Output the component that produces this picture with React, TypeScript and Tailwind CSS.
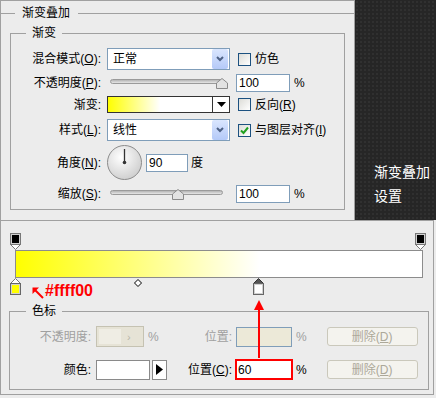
import React from "react";

const Check = ({ checked }: { checked?: boolean }) => (
  <span className="w-[13px] h-[13px] border border-[#1c5180] bg-[image:linear-gradient(135deg,#dcdcd7,#ffffff)] flex items-center justify-center">
    {checked && (
      <svg width="9" height="9" viewBox="0 0 9 9">
        <path d="M1 4.5 L3.5 7 L8 1.5" stroke="#21a121" strokeWidth="2" fill="none" />
      </svg>
    )}
  </span>
);

const Select = ({ value }: { value: string }) => (
  <div className="w-[123px] h-[22px] border border-[#7f9db9] bg-white flex items-center">
    <span className="flex-1 pl-[5px]">{value}</span>
    <span className="w-[16px] h-[20px] mr-px rounded-[2px] bg-[image:linear-gradient(#dae6fe,#b4c9f8)] flex items-center justify-center">
      <svg width="8" height="6" viewBox="0 0 8 6">
        <path d="M1 1 L4 4 L7 1" stroke="#4d6185" strokeWidth="2" fill="none" />
      </svg>
    </span>
  </div>
);

const Slider = ({ thumb }: { thumb: string }) => (
  <div className="relative w-[122px] h-[14px]">
    <div className="absolute left-[3px] top-[3px] w-[113px] h-[5px] rounded-full border border-[#9a9a9a] bg-[image:linear-gradient(#b4b4b4,#e6e6e6)]" />
    <svg className={`absolute top-[2px] ${thumb}`} width="12" height="11" viewBox="0 0 12 11">
      <path d="M0.5 10.5 V5 L6 0.5 L11.5 5 V10.5 Z" fill="#e2e2e2" stroke="#8a8a8a" />
    </svg>
  </div>
);

const Field = ({ value, w }: { value: string; w: string }) => (
  <div className={`${w} h-[18px] border border-[#7f9db9] bg-white pl-[2px] flex items-center`}>{value}</div>
);

const Row = ({ label, cls, children }: { label: React.ReactNode; cls: string; children: React.ReactNode }) => (
  <div className={`flex items-center ${cls}`}>
    <div className="w-[90px] text-right">{label}</div>
    <div className="ml-[6px] flex items-center">{children}</div>
  </div>
);

const TopStop = ({ pos }: { pos: string }) => (
  <svg className={`absolute top-[-18px] ${pos}`} width="12" height="17" viewBox="0 0 12 17">
    <rect x="0.5" y="0.5" width="10" height="11" fill="#d0d0d0" stroke="#777" />
    <rect x="2" y="2" width="7" height="8" fill="#000" />
    <path d="M0.5 11.5 H10.5 L5.5 16.5 Z" fill="#fff" stroke="#777" />
  </svg>
);

const BottomStop = ({ pos, color, active }: { pos: string; color: string; active?: boolean }) => (
  <svg className={`absolute top-[27px] ${pos}`} width="12" height="17" viewBox="0 0 12 17">
    <path d="M5.5 0.5 L10.5 5.5 H0.5 Z" fill={active ? "#555" : "#fff"} stroke={active ? "#333" : "#777"} />
    <rect x="0.5" y="5.5" width="10" height="11" fill="#d0d0d0" stroke="#666" />
    <rect x="2" y="7" width="7" height="8" fill={color} />
  </svg>
);

const DisabledBtn = () => (
  <div className="ml-[20px] w-[91px] h-[19px] rounded-[3px] border border-[#cac8bb] bg-[#f4f3ee] text-[#aca899] flex items-center justify-center">
    删除(<span className="underline">D</span>)
  </div>
);

export default function App() {
  return (
    <div className="w-[436px] h-[398px] bg-[#ececec] text-[12px] leading-[14px] text-black font-['Liberation_Sans','Noto_Sans_CJK_SC',sans-serif]">
      <div className="flex h-[220px]">
        {/* layer style panel */}
        <div className="w-[355px] h-[220px] border-t border-l border-r border-[#a0a0a0] flex flex-col">
          <div className="mt-[5px] h-[14px] flex items-center">
            <div className="w-[14px] h-px bg-[#a0a0a0]" />
            <span className="pl-[7px] pr-[8px]">渐变叠加</span>
            <div className="flex-1 h-px bg-[#a0a0a0]" />
          </div>
          <fieldset className="ml-[9px] mt-[6px] w-[335px] border border-[#a0a0a0] pb-[6px]">
            <legend className="ml-[15px] px-[6px]">渐变</legend>
            <Row label={<>混合模式(<span className="underline">O</span>):</>} cls="h-[22px] mt-[8px]">
              <Select value="正常" />
              <span className="ml-[8px]"><Check /></span>
              <span className="ml-[4px]">仿色</span>
            </Row>
            <Row label={<>不透明度(<span className="underline">P</span>):</>} cls="h-[19px] mt-[3px]">
              <Slider thumb="left-[109px]" />
              <span className="ml-[7px]"><Field value="100" w="w-[54px]" /></span>
              <span className="ml-[4px]">%</span>
            </Row>
            <Row label="渐变:" cls="h-[17px] mt-[4px]">
              <div className="w-[123px] h-[17px] border border-[#333] flex">
                <div className="flex-1 bg-[image:linear-gradient(to_right,#ffff00_0%,#ffffff_50%)]" />
                <div className="w-[17px] border-l border-[#333] bg-white flex items-center justify-center">
                  <svg width="9" height="5" viewBox="0 0 9 5"><path d="M0 0 H9 L4.5 5 Z" fill="#000" /></svg>
                </div>
              </div>
              <span className="ml-[8px]"><Check /></span>
              <span className="ml-[4px]">反向(<span className="underline">R</span>)</span>
            </Row>
            <Row label={<>样式(<span className="underline">L</span>):</>} cls="h-[22px] mt-[6px]">
              <Select value="线性" />
              <span className="ml-[8px]"><Check checked /></span>
              <span className="ml-[4px]">与图层对齐(<span className="underline">I</span>)</span>
            </Row>
            <Row label={<>角度(<span className="underline">N</span>):</>} cls="h-[35px] mt-[4px]">
              <svg width="36" height="36" viewBox="0 0 36 36">
                <defs>
                  <radialGradient id="dial" cx="40%" cy="35%" r="70%">
                    <stop offset="0" stopColor="#ffffff" />
                    <stop offset="1" stopColor="#cdcdcd" />
                  </radialGradient>
                </defs>
                <circle cx="17.5" cy="17.5" r="17" fill="url(#dial)" stroke="#8c8c8c" />
                <line x1="17.5" y1="17.5" x2="17.5" y2="4" stroke="#333" strokeWidth="1.3" />
                <circle cx="17.5" cy="17.5" r="1.8" fill="#333" />
              </svg>
              <span className="ml-[3px]"><Field value="90" w="w-[42px]" /></span>
              <span className="ml-[3px]">度</span>
            </Row>
            <Row label={<>缩放(<span className="underline">S</span>):</>} cls="h-[19px] mt-[4px]">
              <Slider thumb="left-[65px]" />
              <span className="ml-[7px]"><Field value="100" w="w-[54px]" /></span>
              <span className="ml-[4px]">%</span>
            </Row>
          </fieldset>
        </div>
        {/* dark side panel */}
        <div className="flex-1 bg-[#262626] bg-[image:radial-gradient(circle,#303030_1px,transparent_1.5px)] bg-[length:4px_4px] pl-[19px] pt-[159px] text-white text-[14px] leading-[24px] font-['Noto_Sans_CJK_SC',sans-serif]">
          <div>渐变叠加</div>
          <div>设置</div>
        </div>
      </div>

      {/* gradient editor */}
      <div className="relative w-[434px] h-[175px] border border-[#a0a0a0]">
        <div className="relative ml-[14px] mt-[29px] w-[408px] h-[28px] border border-[#8c8c8c] bg-[image:linear-gradient(to_right,#ffff00_0%,#ffffff_60%)]">
          <TopStop pos="left-[-6px]" />
          <TopStop pos="left-[399px]" />
          <BottomStop pos="left-[-6px]" color="#ffff00" />
          <BottomStop pos="left-[237px]" color="#ffffff" active />
          <svg className="absolute top-[28px] left-[118px]" width="8" height="8" viewBox="0 0 8 8">
            <path d="M4 0.5 L7.5 4 L4 7.5 L0.5 4 Z" fill="#fff" stroke="#000" />
          </svg>
        </div>

        <svg className="absolute left-[31px] top-[66px]" width="12" height="12" viewBox="0 0 12 12">
          <path d="M11 11 L2 2" stroke="#ff0000" strokeWidth="2" />
          <path d="M0.5 0.5 H7 L0.5 7 Z" fill="#ff0000" />
        </svg>
        <span className="absolute left-[44px] top-[61px] text-[16px] leading-[18px] font-bold text-[#ff0000]">#ffff00</span>

        <fieldset className="ml-[8px] mt-[26px] w-[420px] border border-[#a0a0a0] pb-[9px]">
          <legend className="ml-[16px] px-[6px]">色标</legend>
          <div className="flex items-center h-[21px] mt-[8px]">
            <div className="w-[81px] text-right text-[#a0a0a0]">不透明度:</div>
            <div className="ml-[5px] w-[71px] flex items-center">
              <div className="w-[48px] h-[21px] border border-[#c5c2b2] bg-[#e6e3d6] flex items-center p-[2px]">
                <div className="w-[22px] h-full bg-[#efede4]" />
                <span className="ml-[6px] text-[#b8b6aa] text-[11px]">›</span>
              </div>
              <span className="ml-[4px] text-[#a0a0a0]">%</span>
            </div>
            <div className="w-[65px] text-right text-[#a0a0a0]">位置:</div>
            <div className="ml-[4px] w-[56px] h-[20px] border border-[#7f9db9] bg-[#ece9d8]" />
            <span className="ml-[4px] text-[#a0a0a0]">%</span>
            <DisabledBtn />
          </div>
          <div className="flex items-center h-[21px] mt-[12px]">
            <div className="w-[81px] text-right">颜色:</div>
            <div className="ml-[5px] w-[71px] flex items-center">
              <div className="w-[54px] h-[20px] border border-[#8a8a8a] bg-white" />
              <div className="ml-[2px] w-[15px] h-[20px] border border-[#8a8a8a] bg-white flex items-center justify-center">
                <svg width="7" height="11" viewBox="0 0 7 11"><path d="M0 0 L7 5.5 L0 11 Z" fill="#000" /></svg>
              </div>
            </div>
            <div className="w-[65px] text-right">位置(<span className="underline">C</span>):</div>
            <div className="ml-[3px] w-[58px] h-[21px] border-2 border-[#ff0000] bg-white pl-px flex items-center">60</div>
            <span className="ml-[3px]">%</span>
            <DisabledBtn />
          </div>
        </fieldset>

        <svg className="absolute left-[252px] top-[79px]" width="12" height="58" viewBox="0 0 12 58">
          <path d="M6 0 L11 10 H1 Z" fill="#ff0000" />
          <line x1="6" y1="9" x2="6" y2="58" stroke="#ff0000" strokeWidth="2" />
        </svg>
      </div>
    </div>
  );
}
